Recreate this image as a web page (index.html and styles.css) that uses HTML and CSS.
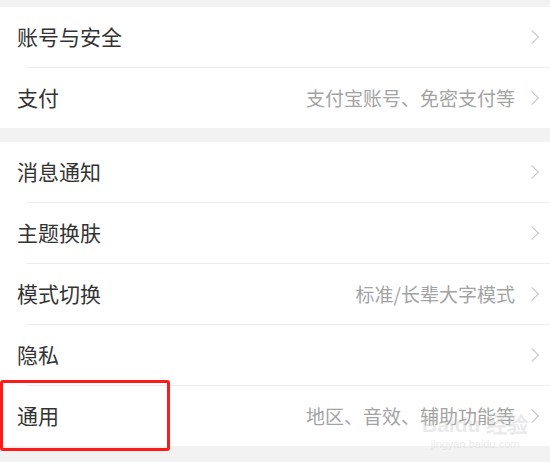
FILE: index.html
```html
<!DOCTYPE html>
<html lang="zh-CN">
<head>
    <meta charset="UTF-8">
    <meta name="viewport" content="width=device-width, initial-scale=1.0">
    <title>设置</title>
    <link rel="stylesheet" href="styles.css">
</head>
<body>
    <div class="group">
        <div class="row">
            <span class="label">账号与安全</span>
            <span class="arrow"></span>
        </div>
        <div class="row">
            <span class="label">支付</span>
            <span class="hint">支付宝账号、免密支付等</span>
            <span class="arrow"></span>
        </div>
    </div>

    <div class="group">
        <div class="row">
            <span class="label">消息通知</span>
            <span class="arrow"></span>
        </div>
        <div class="row">
            <span class="label">主题换肤</span>
            <span class="arrow"></span>
        </div>
        <div class="row">
            <span class="label">模式切换</span>
            <span class="hint">标准/长辈大字模式</span>
            <span class="arrow"></span>
        </div>
        <div class="row">
            <span class="label">隐私</span>
            <span class="arrow"></span>
        </div>
        <div class="row">
            <span class="label">通用</span>
            <span class="hint">地区、音效、辅助功能等</span>
            <span class="arrow"></span>
        </div>
    </div>

    <!-- highlight box drawn over the last row -->
    <div class="mark"></div>

    <div class="watermark">
        <span class="wm-logo">Baidu 经验</span>
        <span class="wm-url">jingyan.baidu.com</span>
    </div>
</body>
</html>
```

FILE: styles.css
```css
body {
    margin: 0;
    padding-top: 7px;
    background-color: #f2f2f2;
    font-family: "Noto Sans CJK SC", "Noto Sans", sans-serif;
    color: #333333;
    position: relative;
    height: 462px;
    overflow: hidden;
}
.group {
    background-color: #ffffff;
    margin-bottom: 14px;
}
.row {
    display: flex;
    align-items: center;
    height: 60px;
    padding: 0 11px 0 17px;
    position: relative;
}
.row + .row {
    border-top: 1px solid #ececec;
}
.row + .row::before {
    content: "";
    position: absolute;
    left: 0;
    top: -1px;
    width: 27px;
    height: 1px;
    background-color: #ffffff;
}
.label {
    flex: 1;
    font-size: 21px;
    line-height: 1;
    margin-top: -2px;
}
.hint {
    font-size: 19px;
    color: #a3a3a3;
    margin-right: 12px;
    line-height: 1;
    margin-top: -2px;
}
.arrow {
    width: 9px;
    height: 9px;
    border-top: 1.5px solid #c4c4c4;
    border-right: 1.5px solid #c4c4c4;
    transform: rotate(45deg);
    margin-right: 2px;
}
.mark {
    position: absolute;
    left: 0;
    top: 380px;
    width: 164px;
    height: 65px;
    border: 3px solid #ff1a1a;
    border-radius: 3px;
}
.watermark {
    position: absolute;
    left: 422px;
    top: 414px;
    display: flex;
    flex-direction: column;
    align-items: center;
    color: rgba(200, 200, 200, 0.4);
    font-family: "Liberation Sans", sans-serif;
}
.wm-logo {
    font-size: 21px;
    font-weight: bold;
    line-height: 1;
}
.wm-url {
    font-size: 11px;
    margin-top: 3px;
}
```
